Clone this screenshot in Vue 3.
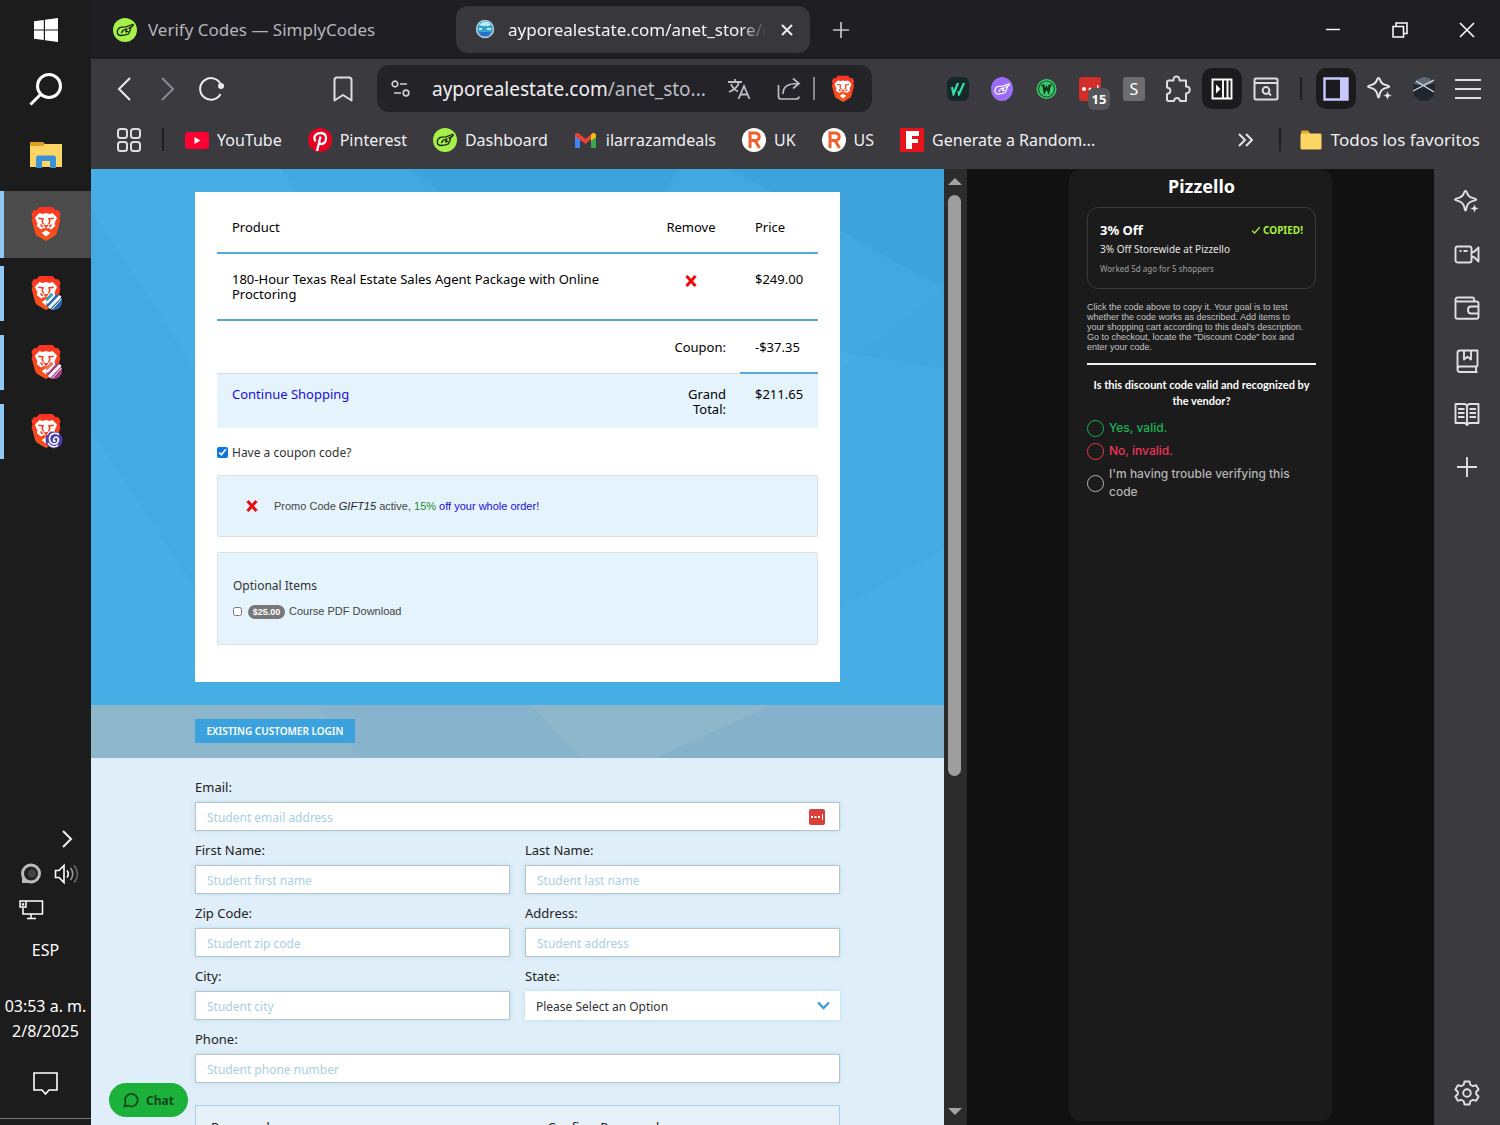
<script setup>
import { ref } from 'vue'

const pinned = ['plain', 'blue', 'pink', 'spiral']
const bookmarks = [
  { icon: 'youtube', label: 'YouTube' },
  { icon: 'pinterest', label: 'Pinterest' },
  { icon: 'simply', label: 'Dashboard' },
  { icon: 'gmail', label: 'ilarrazamdeals' },
  { icon: 'rakuten', label: 'UK' },
  { icon: 'rakuten', label: 'US' },
  { icon: 'flip', label: 'Generate a Random...' },
]
const extensions = ['vv', 'violet', 'wgreen', 'lastpass', 'sgrey', 'puzzle', 'sidepanel', 'search']
const sideTools = ['sparkle', 'video', 'wallet', 'book', 'reader', 'plus']
const fields = [
  { id: 'email', label: 'Email:', hint: 'Student email address', wide: true },
  { id: 'first', label: 'First Name:', hint: 'Student first name' },
  { id: 'last', label: 'Last Name:', hint: 'Student last name' },
  { id: 'zip', label: 'Zip Code:', hint: 'Student zip code' },
  { id: 'address', label: 'Address:', hint: 'Student address' },
  { id: 'city', label: 'City:', hint: 'Student city' },
  { id: 'state', label: 'State:' },
  { id: 'phone', label: 'Phone:', hint: 'Student phone number', wide: true },
]
const answers = [
  { value: 'yes', label: 'Yes, valid.' },
  { value: 'no', label: 'No, invalid.' },
  { value: 'trouble', label: "I'm having trouble verifying this code" },
]
const answer = ref('')
const couponOpen = ref(true)
const pdf = ref(false)
</script>

<template>
  <div class="desktop">
    <svg class="sprite" aria-hidden="true">
      <linearGradient id="lionfill" x1="0" y1="0" x2="0" y2="1">
        <stop offset="0" stop-color="#ff3322" />
        <stop offset="1" stop-color="#f4561c" />
      </linearGradient>
      <symbol id="lion" viewBox="0 0 30 35">
        <path fill="url(#lionfill)" d="M8.500 1h13l3 3.200 2.600-.3 2.400 3.800-1 3.600.8 3.200-3.300 12c-.6 2-1.600 3-3.200 4.100L15 35l-7.800-4.400C5.600 29.500 4.600 28.500 4 26.500L.7 14.500l.8-3.200-1-3.600L2.900 3.900l2.600.3z" />
        <path fill="#fff" d="M8.500 7l3 .9 3.500-.9 3.500.9 3-.9 3.500 3.500 1 1.600-2.500 5.400.7 2.500-4.200 3.400-2.500-1.400-2.500.8-2.500-.8L10 23.400 5.800 20l.7-2.500L4 12.100l1-1.600zM15 24.300l4.300 2.600L15 30.500l-4.300-3.600z" />
        <path fill="none" stroke="#f23c1c" stroke-width="1.500" d="M7.300 12.300l4.700.6-.8 2.600 1.300 3M22.700 12.300l-4.700.6.800 2.600-1.300 3M13 19.200l2 1.300 2-1.300M15 20.500v2.500M9.500 18.500l2.200 2.600M20.500 18.500l-2.200 2.600" />
      </symbol>
      <symbol id="simply" viewBox="0 0 24 24">
        <path fill="none" stroke="currentColor" stroke-width="1.300" stroke-linejoin="round" stroke-linecap="round" d="M4.300 13.500c.4-2.200 1.800-4 4.200-4.300l4.500-.3 6.200-2.400c1.300-.3 1.500 1 .3 1.600l-3.500 2h1.800l-.7 1.700-.3 1.500-1.300 2.500-3 1-4.700.7c-2.200 0-3.700-1.300-3.500-4zM8.500 14.500l2-2.500 3.500-1.200-1.500 3 2.500-.4" />
      </symbol>
      <symbol id="sparkle" viewBox="0 0 26 26">
        <path fill="none" stroke="currentColor" stroke-width="1.900" stroke-linejoin="round" d="M11.500 2c.8 0 1 .5 1.300 1.400 1 3.200 2.400 4.600 5.500 5.500 1 .3 4 .8 4 1.600s-3 1.300-4 1.600c-3.100 1-4.500 2.300-5.500 5.500-.3.900-.5 4-1.300 4s-1-3.100-1.300-4c-1-3.200-2.400-4.500-5.500-5.500-1-.3-3.700-.8-3.700-1.600s2.700-1.300 3.700-1.600c3.100-.9 4.500-2.300 5.500-5.500.3-.9.500-1.400 1.300-1.400z" />
        <path fill="currentColor" stroke="#3b3a3f" stroke-width=".8" d="M20.500 14.500l1.400 3.600 3.600 1.400-3.600 1.400-1.400 3.600-1.400-3.600-3.600-1.400 3.600-1.400z" />
      </symbol>
    </svg>

    <aside class="taskbar">
      <button class="task" aria-label="Start">
        <svg width="24" height="24" viewBox="0 0 24 24" fill="#fff"><path d="M0 3.300l9.800-1.400v9.500H0zM11 1.700L24 0v11.400H11zM0 12.600h9.800v9.500L0 20.700zM11 12.600h13V24l-13-1.700z" /></svg>
      </button>
      <button class="task" aria-label="Search">
        <svg width="34" height="34" viewBox="0 0 34 34" fill="none" stroke="#fff" stroke-width="3"><circle cx="20" cy="14" r="11.500" /><path d="M12 22L1.500 32.500" /></svg>
      </button>
      <button class="task explorer" aria-label="Files">
        <svg width="32" height="28" viewBox="0 0 32 28"><path fill="#d9a227" d="M0 1h13l3 3v4H0z" /><path fill="#fbd667" d="M0 5h13l2-2h17v23H0z" /><path fill="#3a91d8" d="M6 27V17c0-1.500 1-2.500 2.500-2.500h15c1.500 0 2.500 1 2.500 2.500v10h-6v-7h-8v7z" /></svg>
      </button>
      <button v-for="kind in pinned" :key="kind" class="tile" :class="{ current: kind === 'plain' }" :aria-label="'Brave ' + kind">
        <svg width="34" height="37" viewBox="0 0 34 37">
          <use href="#lion" x="2" y="0" width="30" height="35" />
          <g v-if="kind === 'blue' || kind === 'pink'">
            <circle cx="25" cy="27" r="8" :fill="kind === 'blue' ? '#2667ae' : '#a93d86'" />
            <path d="M17.500 28l8-8.700M20 33l11.500-12" stroke="#fff" stroke-width="3" />
            <path d="M17.500 25l6-6" :stroke="kind === 'blue' ? '#39a9c9' : '#f0785a'" stroke-width="3" />
            <path d="M23 34.500L32.500 24" stroke="#fff" stroke-width="1" />
          </g>
          <g v-if="kind === 'spiral'">
            <circle cx="25" cy="27" r="8.500" fill="#4b3fae" />
            <path d="M30 21.500c-5-3-10 0-9.500 5s7 6 8.500 2-2.500-6-4-3 1 3 1.500 2M19 30c2 4 7 5 10 2" fill="none" stroke="#fff" stroke-width="1.600" />
          </g>
        </svg>
      </button>
      <div class="tray">
        <button class="traybtn up" aria-label="More"><svg width="12" height="20" viewBox="0 0 12 20" fill="none" stroke="#eee" stroke-width="2"><path d="M2 2l8 8-8 8" /></svg></button>
        <div class="trayrow">
          <svg width="22" height="22" viewBox="0 0 22 22"><circle cx="11" cy="10.500" r="8.500" fill="#222" stroke="#bbb" stroke-width="3" /><circle cx="12" cy="10.500" r="4" fill="#444" /><path d="M2 12v8h6" fill="#bbb" /></svg>
          <svg width="26" height="22" viewBox="0 0 26 22" fill="none" stroke="#fff" stroke-width="1.600"><path d="M1.500 7.500h3.500l5-5v17l-5-5H1.500z" /><path d="M13 7.500c1.500 2 1.500 5 0 7" /><path stroke="#999" d="M16.500 5c3 3.500 3 8.500 0 12" /><path stroke="#666" d="M20 2.500c4.500 5 4.500 12 0 17" /></svg>
        </div>
        <svg class="monitor" width="25" height="21" viewBox="0 0 25 21" fill="none" stroke="#fff" stroke-width="1.500"><path d="M7 2h16.500v13H4V9M12 15v4M8 19.500h9M1 2h6v6H1zM3 4.500l1 1.500 1-1.500" /></svg>
        <div class="lang">ESP</div>
        <div class="clock">03:53 a. m.<br />2/8/2025</div>
        <button class="notes" aria-label="Notifications"><svg width="25" height="24" viewBox="0 0 25 24" fill="none" stroke="#fff" stroke-width="1.600"><path d="M1 1h23v17h-8l-3.500 4L9 18H1z" /></svg></button>
      </div>
    </aside>

    <div class="browser">
      <header class="tabs">
        <div class="tab idle">
          <span class="fav lime"><svg width="24" height="24"><use href="#simply" /></svg></span>
          <span>Verify Codes — SimplyCodes</span>
        </div>
        <div class="tab active">
          <svg width="20" height="20" viewBox="0 0 20 20"><circle cx="10" cy="9" r="8.500" fill="#35a5cf" stroke="#b9c6d0" stroke-width="1.500" /><path fill="#b8ecfa" d="M4 5l4-3h5l3 3-3 1H7zM4 8h3v2H4zM12 8h4v2h-4z" /><path fill="#2272d0" d="M3.500 12h13l-3 4h-7z" /></svg>
          <span class="tabtitle">ayporealestate.com/anet_store/re</span>
          <button class="plainbtn" aria-label="Close tab"><svg width="12" height="12" viewBox="0 0 12 12" stroke="#eee" stroke-width="2"><path d="M1 1l10 10M11 1L1 11" /></svg></button>
        </div>
        <button class="newtab" aria-label="New tab"><svg width="16" height="16" viewBox="0 0 16 16" stroke="#c4c4c8" stroke-width="1.700"><path d="M8 0v16M0 8h16" /></svg></button>
        <div class="winctl">
          <button aria-label="Minimize"><svg width="14" height="14" viewBox="0 0 14 14" stroke="#fff" stroke-width="1.400"><path d="M0 6.500h14" /></svg></button>
          <button aria-label="Restore"><svg width="16" height="16" viewBox="0 0 16 16" fill="none" stroke="#fff" stroke-width="1.500"><path d="M1 4.500h10.500V15H1zM4 4V1h11v10.500h-3" /></svg></button>
          <button aria-label="Close"><svg width="16" height="16" viewBox="0 0 16 16" stroke="#fff" stroke-width="1.600"><path d="M1 1l14 14M15 1L1 15" /></svg></button>
        </div>
      </header>

      <nav class="toolbar">
        <button class="tool" aria-label="Back"><svg width="14" height="24" viewBox="0 0 14 24" fill="none" stroke="#ececee" stroke-width="2"><path d="M13 1L2 12l11 11" /></svg></button>
        <button class="tool" aria-label="Forward"><svg width="14" height="24" viewBox="0 0 14 24" fill="none" stroke="#88878d" stroke-width="2"><path d="M1 1l11 11L1 23" /></svg></button>
        <button class="tool" aria-label="Reload"><svg width="26" height="24" viewBox="0 0 26 24" fill="none" stroke="#ececee" stroke-width="2"><path d="M22 8A10.800 10.800 0 1 0 21.500 17" /><circle cx="22" cy="9" r="3" fill="#ececee" stroke="none" /></svg></button>
        <button class="tool mark" aria-label="Bookmark"><svg width="20" height="26" viewBox="0 0 20 26" fill="none" stroke="#dedee2" stroke-width="2" stroke-linejoin="round"><path d="M1.500 4c0-1.600.9-2.500 2.500-2.500h12c1.600 0 2.500.9 2.500 2.500v20.500L10 19l-8.500 5.500z" /></svg></button>
        <div class="url">
          <svg width="20" height="18" viewBox="0 0 20 18" fill="none" stroke="#cfcfd4" stroke-width="1.700"><circle cx="4" cy="4" r="2.800" /><path d="M9 4h7M3 13h7" /><circle cx="15" cy="13" r="2.800" /></svg>
          <span class="address">ayporealestate.com<span>/anet_sto...</span></span>
          <svg class="translate" width="24" height="22" viewBox="0 0 24 22" fill="none" stroke="#bdbdc3" stroke-width="1.800"><path d="M1 4h14M8 1v3M12 4c-1 4.500-5 8-10 10M4 6c1.500 4 4 6 7 7.500M11.500 21L17 8l5.500 13M13.500 16.500h7" /></svg>
          <svg width="24" height="24" viewBox="0 0 24 24" fill="none" stroke="#bdbdc3" stroke-width="1.700"><path d="M1.500 8v11.500c0 1.600 1 2.500 2.500 2.500h15c1.600 0 3-.9 3-2.500M6 17c0-7 4-10.500 15-10.500M16 1.500l6 5-6 5" /></svg>
          <i class="bar"></i>
          <svg width="24" height="27"><use href="#lion" /></svg>
        </div>
        <button v-for="e in extensions" :key="e" class="tool" :class="e" :aria-label="e">
          <span v-if="e === 'vv'" class="ext vvbox"><svg width="16" height="14" viewBox="0 0 16 14" fill="none" stroke="#35e0a3" stroke-width="2.200"><path d="M2 5l1.500 7L8 1M8.500 9l.5 3L14 1" /></svg></span>
          <span v-else-if="e === 'violet'" class="ext violetbox"><svg width="22" height="24"><use href="#simply" /></svg></span>
          <svg v-else-if="e === 'wgreen'" width="21" height="22" viewBox="0 0 21 22"><circle cx="10.500" cy="11" r="10" fill="#3ccb6c" /><circle cx="10.500" cy="11" r="8" fill="none" stroke="#14532d" stroke-width="1.200" /><path d="M5.500 7.500h2l1 6 2-4 2 4 1-6h2" fill="none" stroke="#10331e" stroke-width="2.200" /></svg>
          <span v-else-if="e === 'lastpass'" class="lp"><svg width="22" height="24" viewBox="0 0 22 24" fill="#fff"><circle cx="5" cy="12" r="2" /><circle cx="11" cy="12" r="1.500" /><path d="M18 8h1.500v5H18z" /></svg><b>15</b></span>
          <span v-else-if="e === 'sgrey'" class="ext sbox">S</span>
          <svg v-else-if="e === 'puzzle'" width="26" height="28" viewBox="0 0 26 28" fill="none" stroke="#dedee2" stroke-width="2" stroke-linejoin="round"><path d="M4 5.500h4.500c-.5-5.500 6.500-5.500 6 0h6.500v6c5 0 5 6.500 0 7v7.500h-6c-.5-4-5.500-4-6 0H3.500c-1 0-1.500-.6-1.500-1.500V19c4.500-.5 4.500-6 0-6.500V7.500c0-1.300.7-2 2-2z" /></svg>
          <span v-else-if="e === 'sidepanel'" class="raised"><svg width="22" height="22" viewBox="0 0 22 22" fill="none" stroke="#fff" stroke-width="1.900"><path d="M1.500 1.500h19v19h-19zM12 1.500v19M16.500 1.500v19" /><path fill="#fff" stroke="none" d="M5 6.500l4.500 4.500L5 15.500z" /></svg></span>
          <svg v-else width="26" height="24" viewBox="0 0 26 24" fill="none" stroke="#dedee2" stroke-width="2"><rect x="1.500" y="1.500" width="23" height="21" rx="1.500" /><path d="M1.500 6h23" /><circle cx="13" cy="13.500" r="3.400" /><path d="M15.500 16l2.500 2.500" /></svg>
        </button>
        <i class="sep"></i>
        <button class="tool" aria-label="Sidebar"><span class="raised"><svg width="26" height="24" viewBox="0 0 26 24"><path fill="none" stroke="#c9c8ff" stroke-width="2.400" d="M1.500 1.500h23v21h-23z" /><path fill="#c9c8ff" d="M17 1h8v22h-8z" /></svg></span></button>
        <button class="tool bright" aria-label="Leo"><svg width="26" height="26"><use href="#sparkle" /></svg></button>
        <button class="tool" aria-label="Profile"><svg width="24" height="24" viewBox="0 0 24 24"><ellipse cx="12" cy="12" rx="11" ry="12" fill="#20262d" /><path fill="#5d6a78" d="M2 7C4 2 9 0 13 0c4 .500 7 3 8.500 6L12 9z" /><path d="M1 14L22 3M4 4l18 11" stroke="#d5dae0" stroke-width="1.400" /></svg></button>
        <button class="tool" aria-label="Menu"><svg width="26" height="22" viewBox="0 0 26 22" stroke="#dedee2" stroke-width="2.200"><path d="M0 2h26M0 11h26M0 20h26" /></svg></button>
      </nav>

      <nav class="bookmarks">
        <button class="plainbtn" aria-label="Apps"><svg width="26" height="26" viewBox="0 0 26 26" fill="none" stroke="#dedee2" stroke-width="2"><rect x="2" y="2" width="9" height="9" rx="2.500" /><rect x="15" y="2" width="9" height="9" rx="2.500" /><rect x="2" y="15" width="9" height="9" rx="2.500" /><rect x="15" y="15" width="9" height="9" rx="2.500" /></svg></button>
        <i class="sep"></i>
        <a v-for="b in bookmarks" :key="b.label" href="#" class="bm">
          <svg v-if="b.icon === 'youtube'" width="24" height="24" viewBox="0 0 24 24"><rect y="4" width="24" height="17" rx="3.500" fill="#ff0033" /><path fill="#fff" d="M9.500 9l6 3.500-6 3.500z" /></svg>
          <svg v-else-if="b.icon === 'pinterest'" width="24" height="24" viewBox="0 0 24 24"><circle cx="12" cy="12" r="12" fill="#e60023" /><path fill="none" stroke="#fff" stroke-width="2.300" d="M7.500 13.500C4.500 8 8.500 5 12.500 5c5 0 6.500 4 5 8-1.500 3.500-5 4-6 1.500M12.500 8.500L9 23" /></svg>
          <span v-else-if="b.icon === 'simply'" class="fav lime"><svg width="24" height="24"><use href="#simply" /></svg></span>
          <svg v-else-if="b.icon === 'gmail'" width="24" height="24" viewBox="0 0 24 24"><path fill="#4285f4" d="M1 7l5 4v9H1z" /><path fill="#34a853" d="M17 11l5-4v13h-5z" /><path fill="#ea4335" d="M1 6c1-1.500 3-1.500 4.500 0l6 5 6-5L17 11l-5.500 5L6 12 1 8z" /><path fill="#fbbc04" d="M17 6.500c2-2.500 5-1.500 5 1V9l-5 4z" /></svg>
          <svg v-else-if="b.icon === 'rakuten'" width="24" height="24" viewBox="0 0 24 24"><circle cx="12" cy="12" r="12" fill="#fff" /><path fill="none" stroke="#f4602a" stroke-width="3" d="M8 20V5h5.500c5 0 5 7.500 0 7.500H8M13 12.500l4.500 7.500" /></svg>
          <svg v-else width="24" height="24" viewBox="0 0 24 24"><path fill="#e8121c" d="M0 0h24v24H0z" /><path fill="#fff" d="M6 3h13v5h-7v3h6v4h-6v6H6z" /></svg>
          {{ b.label }}
        </a>
        <button class="plainbtn more" aria-label="More bookmarks"><svg width="15" height="14" viewBox="0 0 15 14" fill="none" stroke="#e4e4e8" stroke-width="2"><path d="M1 1l6 6-6 6M8 1l6 6-6 6" /></svg></button>
        <i class="sep"></i>
        <a href="#" class="bm all">
          <svg width="24" height="22" viewBox="0 0 24 22"><path fill="#e0a92e" d="M2 3c0-1 .6-1.500 1.500-1.500H9L11 4v4H2z" /><path fill="#fdd663" d="M1.500 6c0-.9.6-1.500 1.500-1.500h18c.9 0 1.500.6 1.500 1.500v13c0 .9-.6 1.500-1.500 1.500H3c-.9 0-1.500-.6-1.500-1.500z" /></svg>
          Todos los favoritos
        </a>
      </nav>

      <div class="content">
        <main class="page">
          <section class="hero">
            <svg class="facets" viewBox="0 0 853 536" preserveAspectRatio="none" aria-hidden="true">
              <path fill="#3a9ad7" opacity=".3" d="M190 0h663v200L500 140 210 30z" />
              <path fill="#3a9ad7" opacity=".4" d="M320 0h270l-30 40H370zM640 0h213v120z" />
              <path fill="#3fa3dc" opacity=".25" d="M0 40l104 160v220L0 260zM748 200l105-80v260l-105 60z" />
            </svg>
            <div class="card">
              <table>
                <colgroup><col /><col class="c2" /><col class="c3" /></colgroup>
                <thead><tr><th>Product</th><th class="mid">Remove</th><th>Price</th></tr></thead>
                <tbody>
                  <tr class="item">
                    <td>180-Hour Texas Real Estate Sales Agent Package with Online Proctoring</td>
                    <td class="mid"><button class="remove" aria-label="Remove item"><svg width="12" height="12" viewBox="0 0 12 12"><path d="M1.500 1l9 10M10.500 1l-9 10" stroke="#e80c0c" stroke-width="3" /></svg></button></td>
                    <td>$249.00</td>
                  </tr>
                  <tr class="coupon"><td></td><td class="right">Coupon:</td><td class="sum">-$37.35</td></tr>
                  <tr class="total"><td><a href="#">Continue Shopping</a></td><td class="right">Grand Total:</td><td>$211.65</td></tr>
                </tbody>
              </table>
              <label class="have"><input v-model="couponOpen" type="checkbox" /> Have a coupon code?</label>
              <div class="box promo">
                <button class="remove" aria-label="Remove coupon"><svg width="12" height="12" viewBox="0 0 12 12"><path d="M1.500 1l9 10M10.500 1l-9 10" stroke="#e80c0c" stroke-width="3" /></svg></button>
                <span>Promo Code <em>GIFT15</em> active, <span class="pct">15%</span> <span class="off">off your whole order!</span></span>
              </div>
              <div class="box options">
                <div class="opt">Optional Items</div>
                <label class="pdf"><input v-model="pdf" type="checkbox" /><span class="badge">$25.00</span>Course PDF Download</label>
              </div>
            </div>
          </section>
          <section class="strip">
            <svg class="facets" viewBox="0 0 853 53" preserveAspectRatio="none" aria-hidden="true"><path fill="#84b0cd" opacity=".6" d="M225 0h60l110 53H270zM285 0h155l50 53H395z" /><path fill="#83b0c9" opacity=".8" d="M565 53L680 0h173v53z" /></svg>
            <button class="login">EXISTING CUSTOMER LOGIN</button>
          </section>
          <form class="form" @submit.prevent>
            <div v-for="f in fields" :key="f.id" class="field" :class="{ wide: f.wide }">
              <label :for="f.id">{{ f.label }}</label>
              <div class="ctl">
                <select v-if="f.id === 'state'" id="state"><option>Please Select an Option</option></select>
                <input v-else :id="f.id" type="text" :placeholder="f.hint" />
                <svg v-if="f.id === 'state'" class="chev" width="13" height="9" viewBox="0 0 13 9" fill="none" stroke="#3b9fd8" stroke-width="2.400"><path d="M1 1.500l5.500 5.500L12 1.500" /></svg>
                <svg v-if="f.id === 'email'" class="vault" width="16" height="16" viewBox="0 0 16 16"><rect width="16" height="16" rx="2" fill="#d8403c" /><path fill="#fff" d="M2 7h2v2H2zM5.500 7h2v2h-2zM9 7h2v2H9zM13 5h1v6h-1z" /></svg>
              </div>
            </div>
            <div class="passwords">
              <label for="pw">Password:</label><label for="pw2">Confirm Password:</label>
              <input id="pw" type="password" /><input id="pw2" type="password" />
            </div>
          </form>
          <button class="chat"><svg width="16" height="16" viewBox="0 0 16 16" fill="none" stroke="#10451c" stroke-width="1.700"><path d="M1.500 14.500l1-4A6.300 6.300 0 1 1 5 13.500z" /></svg>Chat</button>
        </main>
        <div class="scroll" aria-hidden="true"><i class="tri top"></i><i class="thumb"></i><i class="tri bottom"></i></div>

        <section class="panel">
          <div class="sheet">
            <h1>Pizzello</h1>
            <div class="deal">
              <div class="dealtop"><strong>3% Off</strong><span class="copied"><svg width="8" height="8" viewBox="0 0 8 8" fill="none" stroke="#a6ee3c" stroke-width="1.300"><path d="M0 4.500L2.500 7 8 1" /></svg>COPIED!</span></div>
              <div class="dealname">3% Off Storewide at Pizzello</div>
              <div class="worked">Worked 5d ago for 5 shoppers</div>
            </div>
            <p class="help">Click the code above to copy it. Your goal is to test whether the code works as described. Add items to your shopping cart according to this deal's description. Go to checkout, locate the "Discount Code" box and enter your code.</p>
            <hr />
            <fieldset>
              <legend>Is this discount code valid and recognized by the vendor?</legend>
              <label v-for="a in answers" :key="a.value" :class="a.value"><input v-model="answer" type="radio" name="answer" :value="a.value" /><span>{{ a.label }}</span></label>
            </fieldset>
          </div>
        </section>

        <aside class="tools">
          <button v-for="t in sideTools" :key="t" class="side" :aria-label="t">
            <svg v-if="t === 'sparkle'" width="26" height="26"><use href="#sparkle" /></svg>
            <svg v-else width="26" height="26" viewBox="0 0 26 26" fill="none" stroke="currentColor" stroke-width="1.900" stroke-linejoin="round">
              <path v-if="t === 'video'" d="M3.500 4.500h12c1.200 0 2 .8 2 2v12c0 1.200-.8 2-2 2h-12c-1.200 0-2-.8-2-2v-12c0-1.200.8-2 2-2zM17.500 10.500l3-1 4-4v14l-4-4-3-1M5.500 9h2M9.500 9h4" />
              <path v-else-if="t === 'wallet'" d="M20 6.500V4c0-1-.8-1.500-1.500-1.500H3.500c-1.200 0-2 .8-2 2V22c0 1 .8 1.800 2 1.800h19c1.200 0 2-.8 2-2V8.500c0-1.200-.8-2-2-2h-19c-1.200 0-2-.8-2-2M24.500 11.500H17c-4 0-4 7 0 7h7.500" />
              <path v-else-if="t === 'book'" d="M23.500 18.500V2.500H6C4.500 2.500 3.500 3.500 3.500 5v16.500c0 1.500 1 2.500 2.500 2.500h17.500M3.500 21c0-1.500 1-2.500 2.500-2.500h17.500M22 18.500V24M10 2.500v9l3.500-2.800 3.500 2.800v-9" />
              <path v-else-if="t === 'reader'" d="M1.500 3h9.500l2 1.500L15 3h9.500v19H15l-2 2-2-2H1.500zM13 4.500V24M4 8h6.500M4 12h6.500M4 16h6.500M15.500 8H22M15.500 12H22M15.500 16H22" />
              <path v-else d="M13 3v20M3 13h20" />
            </svg>
          </button>
          <button class="side gear" aria-label="Settings">
            <svg width="28" height="28" viewBox="0 0 28 28" fill="none" stroke="currentColor" stroke-width="1.900" stroke-linejoin="round"><path d="M11.500 2.500h5l.8 3.200 2.600 1.500 3.200-1 2.500 4.300-2.400 2.300v2.400l2.400 2.300-2.500 4.300-3.200-1-2.600 1.500-.8 3.200h-5l-.8-3.200-2.600-1.500-3.200 1-2.500-4.300 2.400-2.300v-2.400L2.400 10.500l2.500-4.300 3.200 1 2.600-1.500z" /><circle cx="14" cy="14" r="3.800" /></svg>
          </button>
        </aside>
      </div>
    </div>
  </div>
</template>

<style>
body { margin: 0; background: #111; }
</style>

<style scoped>
* { box-sizing: border-box; }
.desktop { display: flex; height: 100vh; overflow: hidden; font-family: "Noto Sans", "Open Sans", sans-serif; color: #fff; }
.sprite { position: absolute; width: 0; height: 0; }
svg { display: block; flex: none; }
button { border: 0; padding: 0; margin: 0; background: none; font: inherit; color: inherit; display: flex; align-items: center; justify-content: center; }
a { text-decoration: none; color: inherit; }

.taskbar { width: 91px; flex: none; background: #1c1c1c; display: flex; flex-direction: column; }
.task { height: 59px; flex: none; }
.explorer { height: 73px; }
.tile { height: 67px; margin-bottom: 2px; flex: none; position: relative; }
.tile::before { content: ""; position: absolute; left: 0; top: 6px; bottom: 6px; width: 4px; background: #8fc8f5; }
.tile.current { background: #4b4b4b; }
.tile.current::before { top: 0; bottom: 0; }
.tray { margin-top: auto; border-bottom: 1px solid #777; margin-bottom: 6px; display: flex; flex-direction: column; font-size: 16px; text-align: center; }
.up { align-self: flex-end; width: 48px; height: 24px; }
.trayrow { display: flex; gap: 12px; padding: 12px 0 12px 20px; }
.monitor { margin: 2px 0 0 19px; }
.lang { line-height: 24px; margin: 18px 0 32px; }
.clock { line-height: 25px; }
.notes { height: 24px; margin: 28px 0 22px; }

.browser { flex: 1; min-width: 0; display: flex; flex-direction: column; }
.tabs { height: 59px; flex: none; background: #1f1e23; display: flex; align-items: center; font-size: 17px; }
.tab { height: 47px; display: flex; align-items: center; white-space: nowrap; }
.idle { width: 365px; padding-left: 22px; gap: 11px; color: #b5b4b9; }
.active { width: 354px; padding: 0 17px 0 19px; background: #38373c; border-radius: 12px; color: #f4f4f6; }
.tabtitle { flex: 1; overflow: hidden; margin: 0 15px 0 13px; mask-image: linear-gradient(90deg, #000 90%, transparent); }
.fav { width: 24px; height: 24px; border-radius: 50%; flex: none; }
.lime { background: #a5f04a; color: #17240a; }
.newtab { width: 62px; height: 47px; }
.winctl { margin-left: auto; display: flex; }
.winctl button { width: 67px; height: 59px; }

.toolbar { height: 59px; flex: none; background: #3b3a3f; display: flex; align-items: center; padding: 0 10px 0 11px; }
.tool { width: 44px; height: 44px; flex: none; position: relative; }
.bright { color: #e8e8ec; }
.mark { margin-left: 87px; }
.url { flex: 1; min-width: 0; margin: 0 64px 0 12px; height: 47px; background: #242328; border-radius: 12px; display: flex; align-items: center; padding: 0 17px 0 14px; font-size: 19px; }
.address { flex: 1; margin-left: 21px; white-space: nowrap; color: #f0f0f3; }
.address span { color: #bdbdc3; }
.translate { margin-right: 26px; }
.bar { width: 2px; height: 23px; background: #88878d; margin: 0 16px 0 12px; flex: none; }
.ext { display: flex; align-items: center; justify-content: center; width: 22px; height: 24px; border-radius: 6px; }
.vvbox { background: #17282b; }
.violetbox { background: #9b6cf5; border-radius: 50%; }
.sbox { background: #6d6d6f; border-radius: 3px; font-size: 16px; }
.lp { width: 22px; height: 24px; background: #d32d28; border-radius: 3px; }
.lp b { position: absolute; left: 20px; top: 21px; width: 22px; height: 22px; border-radius: 6px; background: #55555a; font-size: 13px; line-height: 22px; text-align: center; }
.raised { width: 40px; height: 41px; border-radius: 10px; background: #1b1b1e; display: flex; align-items: center; justify-content: center; flex: none; }
.sep { width: 2px; height: 23px; background: #1f1e23; margin: 0 12px; flex: none; }

.bookmarks { height: 51px; flex: none; background: #3b3a3f; display: flex; align-items: center; padding: 0 20px 8px 25px; font-size: 16px; white-space: nowrap; }
.bookmarks .sep { margin: 0 21px 0 20px; }
.bm { display: flex; align-items: center; gap: 8px; margin-right: 26px; color: #f0f0f3; }
.more { margin-left: auto; }
.bookmarks .more + .sep { margin: 0 18px 0 26px; }
.all { margin-right: 0; font-size: 17px; }

.content { flex: 1; min-height: 0; display: flex; background: #111; }
.page { flex: 1; min-width: 0; overflow: hidden; background: #dfeef8; color: #000; position: relative; display: flex; flex-direction: column; }
.hero, .strip { position: relative; flex: none; }
.facets { position: absolute; inset: 0; width: 100%; height: 100%; }
.hero { background: #46aee4; padding: 23px 104px; }
.card { position: relative; background: #fff; padding: 10px 22px 37px; font-size: 13px; line-height: 15px; }
table { width: 100%; border-collapse: separate; border-spacing: 0; table-layout: fixed; }
.c2 { width: 90px; }
.c3 { width: 78px; }
th, td { font-weight: 400; text-align: left; vertical-align: top; padding: 0 14px 0 15px; }
th { height: 52px; padding-top: 18px; border-bottom: 2px solid #52abdb; }
.item td { height: 67px; padding-top: 18px; border-bottom: 2px solid #52abdb; }
.item td:first-child { padding-right: 30px; }
.coupon td { height: 53px; padding-top: 19px; border-bottom: 1px solid #d9dcdf; }
.coupon .sum { border-bottom: 2px solid #52abdb; }
.total td { height: 54px; padding-top: 13px; background: #e5f4fc; }
.total a, .off { color: #1a0ce0; }
th.mid, td.mid { text-align: center; padding-left: 8px; padding-right: 16px; }
.right { text-align: right; }
.remove { display: inline-flex; }
td .remove { padding-top: 3px; }
.have { display: flex; align-items: center; gap: 4px; height: 15px; margin-top: 17px; color: #333; font-size: 12px; }
.have input { width: 11px; height: 11px; margin: 0; accent-color: #0b75e0; }
.box { background: #e5f4fc; border: 1px solid #dcdfe4; border-radius: 2px; }
.promo { height: 62px; margin-top: 15px; padding-left: 28px; display: flex; align-items: center; gap: 16px; color: #444; font-family: "Liberation Sans", Arial, sans-serif; font-size: 11px; }
.pct { color: #1c8a2c; }
.promo em { color: #222; }
.options { margin-top: 15px; padding: 25px 15px 0; height: 93px; color: #333; font-size: 12px; }
.pdf { display: flex; align-items: center; margin-top: 11px; font-family: "Liberation Sans", Arial, sans-serif; font-size: 11px; color: #444; }
.pdf input { width: 9px; height: 9px; margin: 0 6px 0 0; }
.badge { background: #777; color: #fff; border-radius: 7px; font-size: 9px; font-weight: 700; line-height: 14px; width: 37px; text-align: center; margin-right: 4px; }

.strip { background: #8eb7cc; padding: 14px 104px 15px; }
.login { position: relative; background: #3ba2de; color: #fff; width: 160px; height: 24px; font-size: 10px; font-weight: 600; white-space: nowrap; }
.form { padding: 10px 104px 0; display: grid; grid-template-columns: 1fr 1fr; column-gap: 15px; flex: none; }
.field { padding-top: 9px; }
.wide, .passwords { grid-column: 1 / 3; }
.field label, .passwords label { display: block; font-size: 13px; line-height: 20px; color: #222; }
.ctl { position: relative; margin-top: 5px; }
.ctl input, .ctl select { display: block; width: 100%; height: 29px; border: 1px solid #bfc3c7; background: #fff; padding: 2px 12px 0 11px; font-family: inherit; font-size: 12px; box-shadow: 0 0 4px #b5dcf0; border-radius: 0; outline: 0; }
.ctl input::placeholder { color: #a9cfe2; opacity: 1; }
.ctl select { appearance: none; border-color: #fff; color: #333; padding: 2px 10px 0; }
.chev { position: absolute; right: 10px; top: 10px; pointer-events: none; }
.vault { position: absolute; right: 15px; top: 7px; }
.passwords { margin-top: 22px; border: 1px solid #a9cfe0; background: #e6f1f8; padding: 11px 15px; display: grid; grid-template-columns: 1fr 1fr; column-gap: 60px; }
.chat { position: absolute; left: 18px; bottom: 8px; width: 79px; height: 34px; border-radius: 17px; background: #1cb13b; color: #10451c; font-size: 12px; font-weight: 700; gap: 7px; }

.scroll { width: 23px; flex: none; background: #2c2c2c; display: flex; flex-direction: column; align-items: center; padding: 9px 2px 10px 0; }
.tri { border: 7px solid transparent; width: 0; height: 0; }
.top { border-top: 0; border-bottom-color: #a3a3a3; }
.bottom { border-bottom: 0; border-top-color: #a3a3a3; margin-top: auto; }
.thumb { width: 13px; height: 62%; margin-top: 10px; border-radius: 7px; background: #9e9e9e; }

.panel { width: 467px; flex: none; background: #111; display: flex; justify-content: center; padding-bottom: 4px; font-family: Inter, "Liberation Sans", sans-serif; }
.sheet { width: 263px; background: #1b1b1b; border-radius: 12px; padding: 6px 16px 0 18px; }
h1 { margin: 0; font-size: 18px; line-height: 22px; font-weight: 700; text-align: center; font-family: "Noto Sans", sans-serif; }
.deal { margin-top: 10px; height: 82px; border: 1px solid #3a3a3a; border-radius: 11px; padding: 13px 12px 0; font-family: "Noto Sans", sans-serif; }
.dealtop { display: flex; justify-content: space-between; align-items: center; line-height: 18px; font-size: 13px; }
.copied { display: flex; align-items: center; gap: 3px; color: #a6ee3c; font-size: 10px; font-weight: 700; }
.dealname { font-size: 10px; line-height: 20px; color: #e4e4e4; }
.worked { font-size: 8px; line-height: 20px; color: #a0a0a0; }
.help { margin: 13px 0 0; padding-right: 9px; font-family: "Liberation Sans", Arial, sans-serif; font-size: 9px; line-height: 10px; color: #c4c4c4; }
hr { margin: 11px 0 0; border: 0; height: 2px; background: #f2f2f2; }
fieldset { border: 0; padding: 0; margin: 12px 0 0; min-width: 0; }
legend { padding: 0; width: 100%; text-align: center; font-family: Lato, sans-serif; font-size: 11px; line-height: 16px; font-weight: 700; margin-bottom: 10px; }
fieldset label { display: flex; align-items: center; gap: 5px; font-size: 12px; line-height: 18px; font-weight: 500; margin-bottom: 5px; }
fieldset input { appearance: none; width: 17px; height: 17px; flex: none; margin: 0; border: 1px solid currentColor; border-radius: 50%; color: inherit; }
.yes { color: #18b457; }
.no { color: #ef3455; }
.trouble { color: #b4b4b4; }

.tools { width: 66px; flex: none; background: #3b3a3f; color: #e0e0e4; display: flex; flex-direction: column; padding: 6px 0; }
.side { height: 53px; flex: none; }
.gear { margin-top: auto; }
</style>
